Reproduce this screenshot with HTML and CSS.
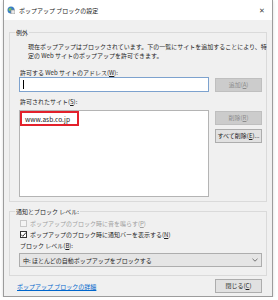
FILE: index.html
```html
<!DOCTYPE html>
<html lang="ja">
<head>
    <meta charset="UTF-8">
    <title>ポップアップ ブロックの設定</title>
    <link rel="stylesheet" href="styles.css">
</head>
<body>
    <div class="window">
        <div class="titlebar">
            <svg class="app-icon" width="8" height="8" viewBox="0 0 8 8">
                <circle cx="4" cy="4" r="3.5" fill="#3b7fc4"/>
                <path d="M1.5 3 Q3 1.5 4.5 2.5 L4 4.5 L2 5 Z" fill="#7cc35a"/>
                <rect x="4" y="4" width="4" height="4" fill="#e8e8e8" stroke="#888" stroke-width="0.6"/>
            </svg>
            <span class="title">ポップアップ ブロックの設定</span>
            <span class="close-x">✕</span>
        </div>

        <div class="client">
            <fieldset class="group">
                <legend>例外</legend>
                <div class="info">
                    <svg class="info-icon" width="15" height="14" viewBox="0 0 15 14">
                        <rect x="2.5" y="1.5" width="11" height="10" fill="#fbeea0" stroke="#6d6d6d"/>
                        <rect x="3" y="2" width="10" height="1.5" fill="#a9a9a9"/>
                        <rect x="9.6" y="4.5" width="1.3" height="4" fill="#333"/>
                        <rect x="9.6" y="9.2" width="1.3" height="1.2" fill="#333"/>
                        <path d="M1 9 L3.5 11.8 L8 6.5" fill="none" stroke="#2fa534" stroke-width="2"/>
                    </svg>
                    <p class="info-text">現在ポップアップはブロックされています。下の一覧にサイトを追加することにより、特<br>定の Web サイトのポップアップを許可できます。</p>
                </div>

                <label class="field-label">許可する Web サイトのアドレス(<u>W</u>):</label>
                <div class="row">
                    <div class="textbox"><span class="caret"></span></div>
                    <button class="btn disabled">追加(<u>A</u>)</button>
                </div>

                <label class="field-label second">許可されたサイト(<u>S</u>):</label>
                <div class="row">
                    <ul class="site-list">
                        <li class="site-item">www.asb.co.jp</li>
                    </ul>
                    <div class="btn-col">
                        <button class="btn disabled">削除(<u>R</u>)</button>
                        <button class="btn">すべて削除(<u>E</u>)...</button>
                    </div>
                </div>
            </fieldset>

            <fieldset class="group notify">
                <legend>通知とブロック レベル:</legend>
                <div class="check dim"><span class="box"></span>ポップアップのブロック時に音を鳴らす(<u>P</u>)</div>
                <div class="check"><span class="box">
                    <svg width="7" height="7" viewBox="0 0 7 7"><path d="M1 3.5 L2.8 5.3 L6 1.5" fill="none" stroke="#222" stroke-width="0.9"/></svg>
                </span>ポップアップのブロック時に通知バーを表示する(<u>N</u>)</div>
                <label class="field-label level">ブロック レベル(<u>B</u>):</label>
                <div class="select">
                    <span>中: ほとんどの自動ポップアップをブロックする</span>
                    <svg width="6" height="4" viewBox="0 0 6 4"><path d="M0.5 0.8 L3 3.2 L5.5 0.8" fill="none" stroke="#555" stroke-width="0.8"/></svg>
                </div>
            </fieldset>

            <div class="footer">
                <a href="#" class="more-link">ポップアップ ブロックの詳細</a>
                <button class="btn">閉じる(<u>C</u>)</button>
            </div>
        </div>
    </div>
</body>
</html>
```

FILE: styles.css
```css
body {
    margin: 0;
    background: #ffffff;
    font-family: "Noto Sans CJK JP", "Noto Sans", sans-serif;
    font-size: 6px;
    line-height: 9px;
    color: #1e1e1e;
}

.window {
    box-sizing: border-box;
    width: 270px;
    height: 297px;
    margin-left: 3px;
    border: 1px solid #9c9c9c;
    border-top: none;
    display: flex;
    flex-direction: column;
    box-shadow: 0 1px 3px rgba(0, 0, 0, 0.15);
}

.titlebar {
    height: 20px;
    background: #ffffff;
    display: flex;
    align-items: center;
    padding: 0 7px 0 3px;
}

.app-icon {
    margin-right: 4px;
}

.title {
    flex: 1;
    color: #222;
}

.close-x {
    font-size: 7px;
    color: #444;
}

.client {
    flex: 1;
    background: #f0f0f0;
    display: flex;
    flex-direction: column;
}

.group {
    margin: 8px 5px 0 5px;
    padding: 5px 4px 4px 9px;
    border: 1px solid #dadada;
    min-inline-size: 0;
}

.group legend {
    padding: 0 1px;
    margin-left: -4px;
}

.info {
    display: flex;
    align-items: center;
}

.info-icon {
    margin-left: 0;
    margin-right: 9px;
}

.info-text {
    margin: 0;
    white-space: nowrap;
}

.field-label {
    display: block;
    margin: 8px 0 0 1px;
}

.field-label.second {
    margin-top: 5px;
    margin-bottom: 4px;
}

.row {
    display: flex;
    gap: 6px;
    align-items: flex-start;
}

.textbox {
    box-sizing: border-box;
    width: 190px;
    height: 15px;
    background: #ffffff;
    border: 1px solid #7da2ce;
    padding: 2px 2px;
}

.caret {
    display: block;
    width: 1px;
    height: 9px;
    background: #000;
    margin-left: 1px;
}

.btn {
    box-sizing: border-box;
    width: 47px;
    height: 14px;
    padding: 0;
    font-family: inherit;
    font-size: 6px;
    line-height: 12px;
    background: #e1e1e1;
    border: 1px solid #adadad;
    color: #1e1e1e;
    white-space: nowrap;
}

.btn.disabled {
    background: #cccccc;
    border-color: #bfbfbf;
    color: #8c8c8c;
}

.row .btn {
    margin-top: 1px;
}

.site-list {
    box-sizing: border-box;
    width: 190px;
    height: 87px;
    margin: 0;
    padding: 0;
    list-style: none;
    background: #ffffff;
    border: 1px solid #b4b4b4;
}

.site-item {
    box-sizing: border-box;
    width: 59px;
    height: 15px;
    padding: 2px 3px;
    border: 2px solid #e3212b;
    color: #222;
    font-size: 6.6px;
}

.btn-col {
    display: flex;
    flex-direction: column;
    gap: 3px;
}

.group.notify {
    margin-top: 5px;
    padding: 3px 4px 8px 9px;
}

.check {
    display: flex;
    align-items: center;
    margin-bottom: 2px;
    padding-left: 1px;
}

.check .box {
    box-sizing: border-box;
    width: 7px;
    height: 7px;
    border: 1px solid #333;
    background: #fff;
    margin-right: 3px;
    display: flex;
}

.check .box svg {
    margin: -1px;
}

.check.dim {
    color: #a0a0a0;
}

.check.dim .box {
    border-color: #c8c8c8;
    background: #f4f4f4;
}

.field-label.level {
    margin: 1px 0 3px 1px;
}

.select {
    box-sizing: border-box;
    width: 243px;
    height: 14px;
    background: #e5e5e5;
    border: 1px solid #adadad;
    display: flex;
    align-items: center;
    justify-content: space-between;
    padding: 0 3px 0 3px;
}

.footer {
    display: flex;
    justify-content: space-between;
    align-items: center;
    margin: 3px 10px 0 13px;
}

.more-link {
    color: #0066cc;
}
```
